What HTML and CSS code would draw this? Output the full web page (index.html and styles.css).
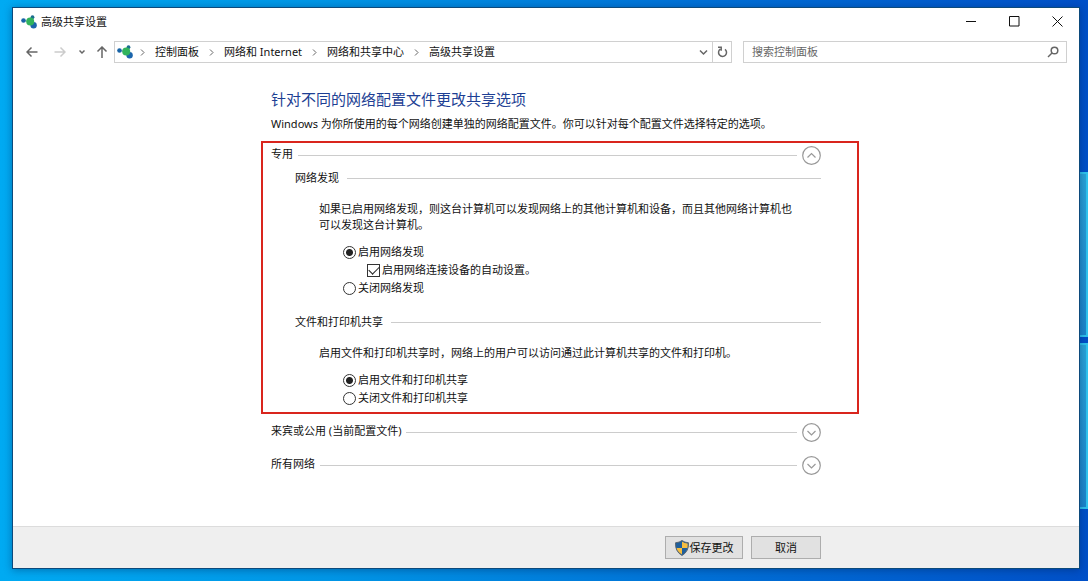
FILE: index.html
```html
<!DOCTYPE html>
<html lang="zh-CN">
<head>
    <meta charset="UTF-8">
    <meta name="viewport" content="width=device-width, initial-scale=1.0">
    <title>高级共享设置</title>
    <link rel="stylesheet" href="styles.css">
</head>
<body>
    <!-- wallpaper logo panes -->
    <div class="pane pane-top"></div>
    <div class="pane pane-bottom"></div>

    <div class="window">
        <header class="titlebar">
            <svg class="app-icon" width="16" height="14" viewBox="0 0 16 14">
                <path d="M3 6L8 6L12 2M9 6L13 11" stroke="#8aa9b8" fill="none"/>
                <circle cx="2.5" cy="5.5" r="2.3" fill="#1763a6"/>
                <circle cx="11.5" cy="2.2" r="1.9" fill="#1c6d8f"/>
                <circle cx="12.6" cy="10.2" r="3.2" fill="#1b65ac"/>
                <circle cx="9.2" cy="6.5" r="4" fill="#31b35c"/>
            </svg>
            <span class="window-title">高级共享设置</span>
            <div class="window-controls">
                <button type="button" aria-label="最小化">
                    <svg width="11" height="11" viewBox="0 0 11 11"><path d="M0 5.5H10"/></svg>
                </button>
                <button type="button" aria-label="最大化">
                    <svg width="11" height="11" viewBox="0 0 11 11"><path d="M.5 .5H10V10H.5Z"/></svg>
                </button>
                <button type="button" aria-label="关闭">
                    <svg width="11" height="11" viewBox="0 0 11 11"><path d="M.5 .5L10.500 10.500M10.500 .5L.5 10.500"/></svg>
                </button>
            </div>
        </header>

        <div class="toolbar">
            <button type="button" class="nav-btn" aria-label="后退">
                <svg width="12" height="12" viewBox="0 0 12 12"><path d="M11.500 6H1M5.500 1.500L1 6L5.500 10.500"/></svg>
            </button>
            <button type="button" class="nav-btn disabled" aria-label="前进" disabled>
                <svg width="12" height="12" viewBox="0 0 12 12"><path d="M.5 6H11M6.500 1.500L11 6L6.500 10.500"/></svg>
            </button>
            <button type="button" class="nav-btn recent" aria-label="最近位置">
                <svg width="6" height="6" viewBox="0 0 6 6"><path d="M.5 1.500L3 4L5.500 1.500"/></svg>
            </button>
            <button type="button" class="nav-btn up" aria-label="上移">
                <svg width="12" height="12" viewBox="0 0 12 12"><path d="M6 12V1M1.500 5.500L6 1L10.500 5.500"/></svg>
            </button>

            <div class="address">
                <svg class="app-icon" width="16" height="14" viewBox="0 0 16 14">
                    <path d="M3 6L8 6L12 2M9 6L13 11" stroke="#8aa9b8" fill="none"/>
                    <circle cx="2.5" cy="5.5" r="2.3" fill="#1763a6"/>
                    <circle cx="11.5" cy="2.2" r="1.9" fill="#1c6d8f"/>
                    <circle cx="12.6" cy="10.2" r="3.2" fill="#1b65ac"/>
                    <circle cx="9.2" cy="6.5" r="4" fill="#31b35c"/>
                </svg>
                <nav class="crumbs">
                    <svg class="sep" width="5" height="7" viewBox="0 0 5 7"><path d="M1 .5L4 3.500L1 6.500"/></svg>
                    <a href="#">控制面板</a>
                    <svg class="sep" width="5" height="7" viewBox="0 0 5 7"><path d="M1 .5L4 3.500L1 6.500"/></svg>
                    <a href="#">网络和 Internet</a>
                    <svg class="sep" width="5" height="7" viewBox="0 0 5 7"><path d="M1 .5L4 3.500L1 6.500"/></svg>
                    <a href="#">网络和共享中心</a>
                    <svg class="sep" width="5" height="7" viewBox="0 0 5 7"><path d="M1 .5L4 3.500L1 6.500"/></svg>
                    <a href="#">高级共享设置</a>
                </nav>
                <button type="button" class="address-btn" aria-label="以前的位置">
                    <svg width="9" height="7" viewBox="0 0 9 7"><path d="M1 1.500L4.500 5L8 1.500"/></svg>
                </button>
                <button type="button" class="address-btn refresh" aria-label="刷新">
                    <svg width="11" height="12" viewBox="0 0 11 12"><path d="M8 3.300A4 4 0 1 1 3.200 3.200M1 1.300H4.200V4.800"/></svg>
                </button>
            </div>

            <div class="search">
                <input type="text" placeholder="搜索控制面板" aria-label="搜索控制面板">
                <svg width="12" height="12" viewBox="0 0 12 12"><circle cx="7.500" cy="4.500" r="3.300"/><path d="M5 7L1 11"/></svg>
            </div>
        </div>

        <main class="content">
            <div class="column">
                <h1>针对不同的网络配置文件更改共享选项</h1>
                <p class="intro">Windows 为你所使用的每个网络创建单独的网络配置文件。你可以针对每个配置文件选择特定的选项。</p>

                <section class="highlight">
                    <div class="profile">
                        <h2>专用</h2>
                        <hr>
                        <button type="button" class="toggle" aria-label="折叠">
                            <svg width="19" height="19" viewBox="0 0 19 19"><circle cx="9.500" cy="9.500" r="8.800"/><path d="M5.500 11.500L9.500 7.500L13.500 11.500"/></svg>
                        </button>
                    </div>

                    <div class="group">
                        <div class="group-head">
                            <h3>网络发现</h3>
                            <hr>
                        </div>
                        <p>如果已启用网络发现，则这台计算机可以发现网络上的其他计算机和设备，而且其他网络计算机也可以发现这台计算机。</p>
                        <div class="options">
                            <label><input type="radio" name="discovery" checked>启用网络发现</label>
                            <label class="nested"><input type="checkbox" checked>启用网络连接设备的自动设置。</label>
                            <label><input type="radio" name="discovery">关闭网络发现</label>
                        </div>
                    </div>

                    <div class="group">
                        <div class="group-head">
                            <h3>文件和打印机共享</h3>
                            <hr>
                        </div>
                        <p>启用文件和打印机共享时，网络上的用户可以访问通过此计算机共享的文件和打印机。</p>
                        <div class="options">
                            <label><input type="radio" name="sharing" checked>启用文件和打印机共享</label>
                            <label><input type="radio" name="sharing">关闭文件和打印机共享</label>
                        </div>
                    </div>
                </section>

                <div class="profiles">
                    <div class="profile">
                        <h2>来宾或公用 (当前配置文件)</h2>
                        <hr>
                        <button type="button" class="toggle" aria-label="展开">
                            <svg width="19" height="19" viewBox="0 0 19 19"><circle cx="9.500" cy="9.500" r="8.800"/><path d="M5.500 8L9.500 12L13.500 8"/></svg>
                        </button>
                    </div>
                    <div class="profile">
                        <h2>所有网络</h2>
                        <hr>
                        <button type="button" class="toggle" aria-label="展开">
                            <svg width="19" height="19" viewBox="0 0 19 19"><circle cx="9.500" cy="9.500" r="8.800"/><path d="M5.500 8L9.500 12L13.500 8"/></svg>
                        </button>
                    </div>
                </div>
            </div>
        </main>

        <footer class="footer">
            <div class="column actions">
                <button type="button" class="btn save">
                    <svg width="14" height="16" viewBox="0 0 14 16">
                        <path d="M7 .5Q9.500 2.500 13.500 2.800Q14 11.500 7 15.500Q0 11.500 .5 2.800Q4.500 2.500 7 .5Z" fill="#1f5f9c"/>
                        <path d="M7 1.500Q9.500 3.300 12.700 3.600V8H7Z" fill="#f5bd3f"/>
                        <path d="M7 8V14.500Q2 11.500 1.400 8Z" fill="#f5bd3f"/>
                        <path d="M7 .5Q9.500 2.500 13.500 2.800Q14 11.500 7 15.500Q0 11.500 .5 2.800Q4.500 2.500 7 .5Z" fill="none" stroke="#5b6670"/>
                    </svg>
                    保存更改
                </button>
                <button type="button" class="btn">取消</button>
            </div>
        </footer>
    </div>
</body>
</html>
```

FILE: styles.css
```css
* {
    box-sizing: border-box;
}

body {
    margin: 0;
    padding: 7px 8px 12px 12px;
    min-height: 100vh;
    display: flex;
    position: relative;
    font-family: "Noto Sans", "Noto Sans CJK SC", sans-serif;
    font-size: 11px;
    line-height: 16px;
    color: #111;
    background: linear-gradient(to right, #00aaf2 0%, #0096e6 30%, #0070d6 65%, #0050c8 100%);
}

h1, h2, h3, p {
    margin: 0;
    font-size: 11px;
    font-weight: normal;
}

button {
    font: inherit;
    color: inherit;
    border: none;
    background: none;
    padding: 0;
    display: flex;
    align-items: center;
    justify-content: center;
}

svg {
    flex: none;
    fill: none;
}

/* Wallpaper */
.pane {
    position: absolute;
    right: 0;
    width: 12px;
    border: 2px solid #2fc4ee;
    background: linear-gradient(#2aa3d8, #1c86cc);
}

.pane-top {
    top: 172px;
    height: 165px;
}

.pane-bottom {
    top: 343px;
    height: 166px;
}

/* Window */
.window {
    flex: 1;
    display: flex;
    flex-direction: column;
    position: relative;
    background: #fff;
    border: 1px solid #0c4a7c;
    box-shadow: 0 1px 8px rgba(0, 30, 80, 0.4);
}

.titlebar {
    display: flex;
    align-items: center;
    height: 27px;
    padding-left: 8px;
}

.window-title {
    margin-left: 4px;
}

.window-controls {
    display: flex;
    align-self: stretch;
    margin-left: auto;
}

.window-controls button {
    width: 43px;
}

.window-controls path {
    stroke: #111;
}

/* Navigation and address bar */
.toolbar {
    display: flex;
    height: 22px;
    margin-top: 6px;
    padding: 0 12px 0 5px;
}

.nav-btn {
    width: 28px;
}

.nav-btn path {
    stroke: #666;
    stroke-width: 1.5;
}

.nav-btn.disabled path {
    stroke: #ccc;
}

.nav-btn.recent {
    width: 16px;
}

.nav-btn.up {
    width: 24px;
}

.address {
    flex: 2;
    display: flex;
    align-items: center;
    padding-left: 2px;
    border: 1px solid #d0d0d0;
}

.crumbs {
    flex: 1;
    display: flex;
    align-items: center;
    gap: 10px;
    padding-left: 7px;
    white-space: nowrap;
}

.crumbs a {
    color: inherit;
    text-decoration: none;
}

.sep path {
    stroke: #666;
}

.address-btn {
    width: 18px;
    align-self: stretch;
}

.address-btn path {
    stroke: #666;
    stroke-width: 1.5;
}

.address-btn.refresh {
    width: 19px;
    border-left: 1px solid #d0d0d0;
}

.search {
    flex: 1;
    display: flex;
    align-items: center;
    margin-left: 11px;
    padding: 0 7px 0 8px;
    border: 1px solid #d0d0d0;
}

.search input {
    flex: 1;
    min-width: 0;
    padding: 0;
    border: none;
    outline: none;
    font: inherit;
    background: none;
}

.search input::placeholder {
    color: #666;
}

.search svg {
    stroke: #666;
    stroke-width: 1.5;
}

/* Content */
.content {
    flex: 1;
    padding: 26px 48px;
}

.column {
    width: 100%;
    max-width: 550px;
    margin: 0 auto;
}

h1 {
    font-size: 15px;
    line-height: 20px;
    color: #1d3f94;
}

.intro {
    margin-top: 7px;
}

.highlight {
    margin: 9px -38px 0 -10px;
    padding: 2px 36px 5px 8px;
    border: 2px solid #d9251d;
}

hr {
    flex: 1;
    margin: 0;
    border: none;
    border-top: 1px solid #ccc;
}

.profile {
    display: flex;
    align-items: center;
    gap: 5px;
    height: 20px;
}

.profile h2 {
    padding-bottom: 3px;
}

.toggle path,
.toggle circle {
    stroke: #999;
    stroke-width: 1.2;
}

.group {
    margin-top: 5px;
    padding-left: 24px;
}

.group + .group {
    margin-top: 17px;
}

.group-head {
    display: flex;
    align-items: center;
    gap: 8px;
}

.group p {
    margin-top: 15px;
    padding: 0 20px 0 24px;
}

.options {
    display: flex;
    flex-direction: column;
    align-items: flex-start;
    margin-top: 10px;
    padding-left: 48px;
}

.options label {
    display: flex;
    align-items: center;
    gap: 2px;
    height: 18px;
}

.options .nested {
    margin-left: 24px;
}

.options input {
    appearance: none;
    width: 13px;
    height: 13px;
    margin: 0;
    border: 1px solid #333;
    background: #fff;
}

.options input[type="radio"] {
    border-radius: 50%;
}

.options input[type="radio"]:checked {
    background: radial-gradient(circle, #222 3px, #fff 4px);
}

.options input[type="checkbox"] {
    display: flex;
    align-items: center;
    justify-content: center;
}

.options input[type="checkbox"]:checked::before {
    content: "";
    width: 9px;
    height: 5px;
    margin-bottom: 3px;
    border: solid #222;
    border-width: 0 0 1px 1px;
    transform: rotate(-45deg);
}

.profiles {
    display: flex;
    flex-direction: column;
    gap: 13px;
    margin-top: 8px;
}

/* Footer */
.footer {
    padding: 9px 48px;
    border-top: 1px solid #dcdcdc;
    background: #efefef;
}

.actions {
    display: flex;
    justify-content: flex-end;
    gap: 8px;
}

.btn {
    width: 70px;
    height: 23px;
    border: 1px solid #adadad;
    background: #e1e1e1;
}

.btn.save {
    width: 78px;
    gap: 1px;
}
```
